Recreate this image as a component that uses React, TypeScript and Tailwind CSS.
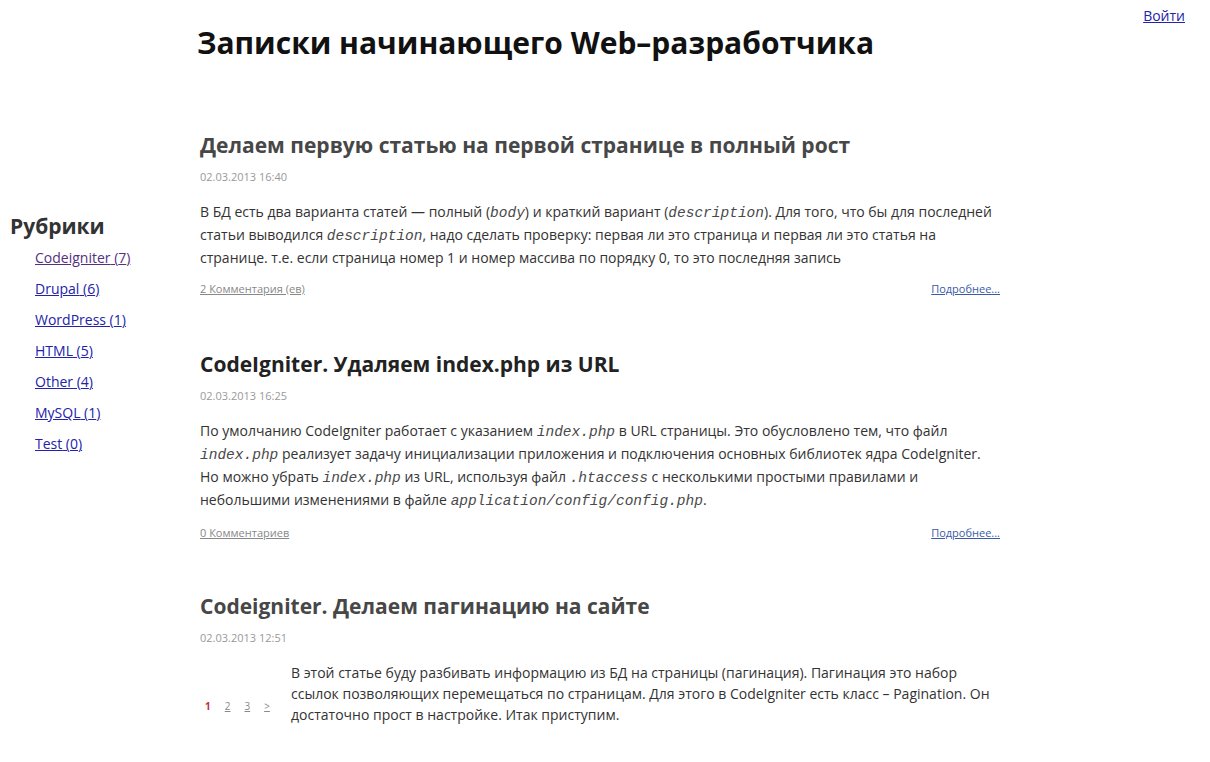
import React from "react";

type Category = { name: string; count: number; visited?: boolean };

const categories: Category[] = [
  { name: "Codeigniter", count: 7, visited: true },
  { name: "Drupal", count: 6 },
  { name: "WordPress", count: 1 },
  { name: "HTML", count: 5 },
  { name: "Other", count: 4 },
  { name: "MySQL", count: 1 },
  { name: "Test", count: 0 },
];

// inline code fragments inside post bodies
function Code({ children }: { children: React.ReactNode }) {
  return (
    <code className="font-['Liberation_Mono',monospace] italic text-[14.5px] leading-none text-[#4a4a4a]">
      {children}
    </code>
  );
}

function PostMeta({ date }: { date: string }) {
  return (
    <div className="mt-[9px] text-[11px] leading-4 text-[#999]">{date}</div>
  );
}

function PostFooter({ comments, gap = "mt-3" }: { comments: string; gap?: string }) {
  return (
    <div className={`${gap} flex justify-between text-[11px] leading-4`}>
      <a href="#" className="text-[#888] underline">
        {comments}
      </a>
      <a href="#" className="text-[#3b5ba8] underline">
        Подробнее...
      </a>
    </div>
  );
}

export default function App() {
  return (
    <div className="min-h-screen bg-white font-['Open_Sans',sans-serif] text-[#333]">
      {/* header */}
      <div className="flex h-[63px] items-start justify-between">
        <h1 className="ml-[197px] mt-[23px] text-[30px] font-bold leading-10 text-[#111]">
          Записки начинающего Web–разработчика
        </h1>
        <a
          href="#"
          className="mr-[25px] mt-[6px] text-[14px] leading-5 text-[#2222aa] underline"
        >
          Войти
        </a>
      </div>

      <div className="flex">
        {/* sidebar */}
        <aside className="w-[200px] shrink-0 pl-[10px] pt-[148px]">
          <h2 className="text-[21px] font-bold leading-[30px] text-[#333]">
            Рубрики
          </h2>
          <ul className="mt-px pl-[25px]">
            {categories.map((c) => (
              <li key={c.name} className="h-[31px] text-[14px] leading-[31px]">
                <a
                  href="#"
                  className={
                    c.visited
                      ? "text-[#55307f] underline"
                      : "text-[#2222aa] underline"
                  }
                >
                  {c.name} ({c.count})
                </a>
              </li>
            ))}
          </ul>
        </aside>

        {/* posts */}
        <main className="w-[800px] pt-[67px]">
          <article className="mb-[52px]">
            <h2 className="text-[21px] font-bold leading-[30px] text-[#474747]">
              Делаем первую статью на первой странице в полный рост
            </h2>
            <PostMeta date="02.03.2013 16:40" />
            <p className="mt-[15px] text-[14px] leading-[23px]">
              В БД есть два варианта статей — полный (<Code>body</Code>) и краткий
              вариант (<Code>description</Code>). Для того, что бы для последней
              статьи выводился <Code>description</Code>, надо сделать проверку:
              первая ли это страница и первая ли это статья на странице. т.е. если
              страница номер 1 и номер массива по порядку 0, то это последняя
              запись
            </p>
            <PostFooter comments="2 Комментария (ев)" />
          </article>

          <article className="mb-[50px]">
            <h2 className="text-[21px] font-bold leading-[30px] text-[#222]">
              CodeIgniter. Удаляем index.php из URL
            </h2>
            <PostMeta date="02.03.2013 16:25" />
            <p className="mt-[15px] text-[14px] leading-[23px]">
              По умолчанию CodeIgniter работает с указанием <Code>index.php</Code>{" "}
              в URL страницы. Это обусловлено тем, что файл <Code>index.php</Code>{" "}
              реализует задачу инициализации приложения и подключения основных
              библиотек ядра CodeIgniter. Но можно убрать <Code>index.php</Code>{" "}
              из URL, используя файл <Code>.htaccess</Code> с несколькими простыми
              правилами и небольшими изменениями в файле{" "}
              <Code>application/config/config.php</Code>.
            </p>
            <PostFooter comments="0 Комментариев" gap="mt-[14px]" />
          </article>

          <article>
            <h2 className="text-[21px] font-bold leading-[30px] text-[#474747]">
              Codeigniter. Делаем пагинацию на сайте
            </h2>
            <PostMeta date="02.03.2013 12:51" />
            <div className="mt-[16px] flex items-start">
              <div className="flex w-[91px] shrink-0 gap-[14px] pl-[5px] pt-[36px] text-[10px] leading-4">
                <span className="font-bold text-[#c0304a]">1</span>
                <a href="#" className="text-[#888] underline">2</a>
                <a href="#" className="text-[#888] underline">3</a>
                <a href="#" className="text-[#888] underline">&gt;</a>
              </div>
              <p className="text-[14px] leading-[21px]">
                В этой статье буду разбивать информацию из БД на страницы
                (пагинация). Пагинация это набор ссылок позволяющих перемещаться по
                страницам. Для этого в CodeIgniter есть класс – Pagination. Он
                достаточно прост в настройке. Итак приступим.
              </p>
            </div>
          </article>
        </main>
      </div>
    </div>
  );
}
